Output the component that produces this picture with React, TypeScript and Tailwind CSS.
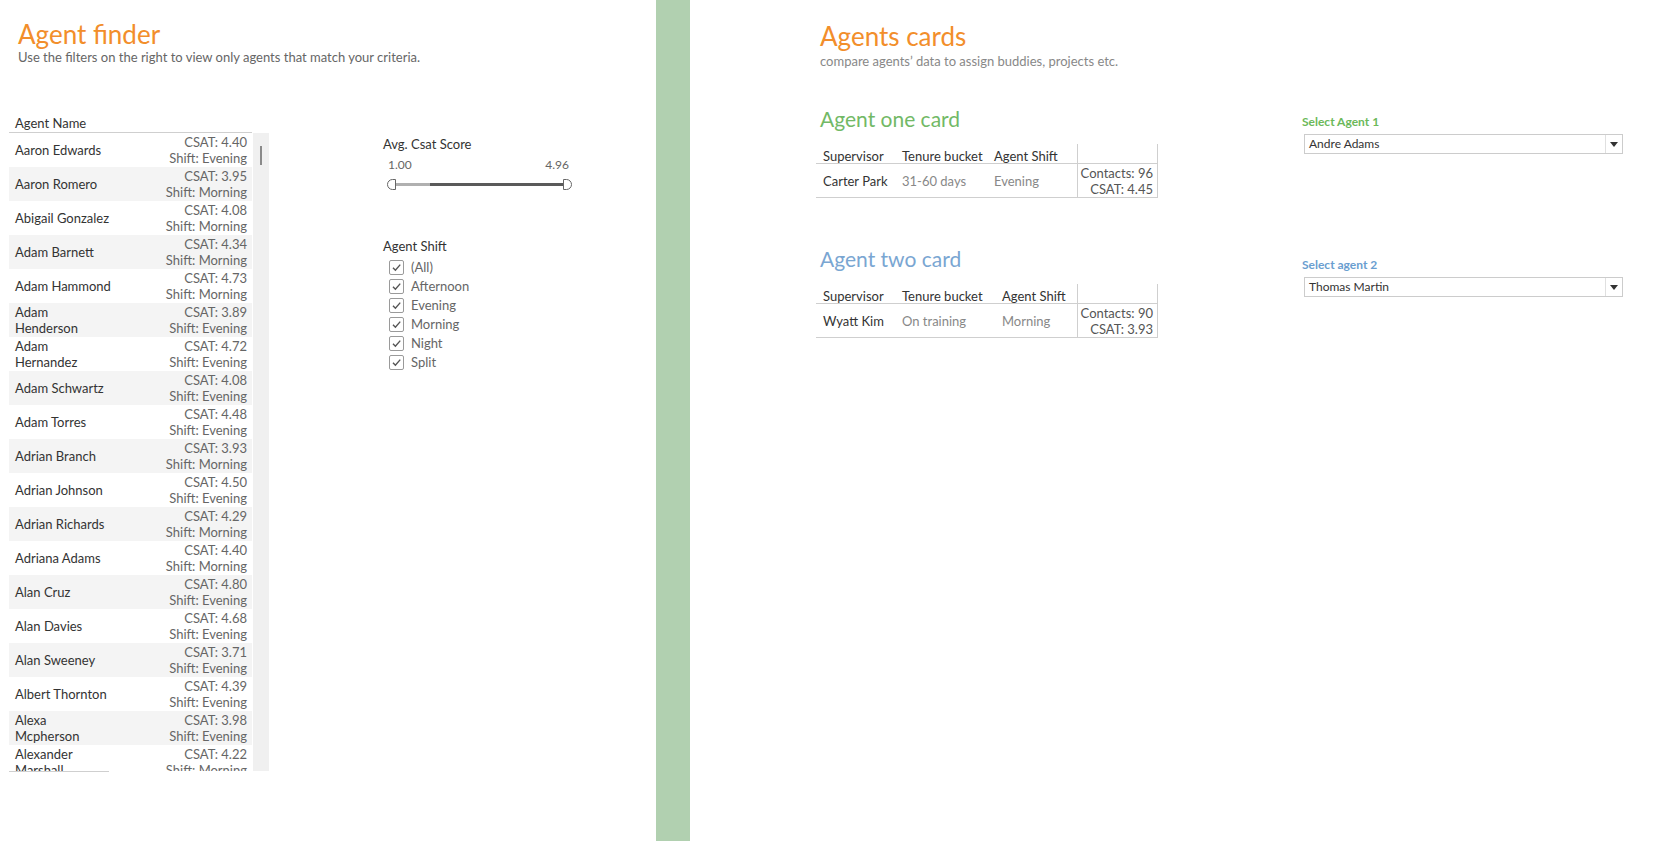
import React from "react";

type Agent = { name: string[]; csat: string; shift: string };

const agents: Agent[] = [
  { name: ["Aaron Edwards"], csat: "4.40", shift: "Evening" },
  { name: ["Aaron Romero"], csat: "3.95", shift: "Morning" },
  { name: ["Abigail Gonzalez"], csat: "4.08", shift: "Morning" },
  { name: ["Adam Barnett"], csat: "4.34", shift: "Morning" },
  { name: ["Adam Hammond"], csat: "4.73", shift: "Morning" },
  { name: ["Adam", "Henderson"], csat: "3.89", shift: "Evening" },
  { name: ["Adam", "Hernandez"], csat: "4.72", shift: "Evening" },
  { name: ["Adam Schwartz"], csat: "4.08", shift: "Evening" },
  { name: ["Adam Torres"], csat: "4.48", shift: "Evening" },
  { name: ["Adrian Branch"], csat: "3.93", shift: "Morning" },
  { name: ["Adrian Johnson"], csat: "4.50", shift: "Evening" },
  { name: ["Adrian Richards"], csat: "4.29", shift: "Morning" },
  { name: ["Adriana Adams"], csat: "4.40", shift: "Morning" },
  { name: ["Alan Cruz"], csat: "4.80", shift: "Evening" },
  { name: ["Alan Davies"], csat: "4.68", shift: "Evening" },
  { name: ["Alan Sweeney"], csat: "3.71", shift: "Evening" },
  { name: ["Albert Thornton"], csat: "4.39", shift: "Evening" },
  { name: ["Alexa", "Mcpherson"], csat: "3.98", shift: "Evening" },
  { name: ["Alexander", "Marshall"], csat: "4.22", shift: "Morning" },
];

const shifts = ["(All)", "Afternoon", "Evening", "Morning", "Night", "Split"];

const Check = () => (
  <span className="flex h-[15px] w-[15px] items-center justify-center rounded-[2px] border border-[#9a9a9a] bg-white">
    <svg width="11" height="11" viewBox="0 0 10 10">
      <path d="M1.8 5.2 L4 7.4 L8.4 2.4" fill="none" stroke="#555" strokeWidth="1.3" />
    </svg>
  </span>
);

const AgentRow = ({ a, i }: { a: Agent; i: number }) => (
  <div className={`flex h-[34px] shrink-0 items-center justify-between pl-[6px] pr-[5px] ${i % 2 ? "bg-[#f4f4f4]" : "bg-white"}`}>
    <div className="text-[13px] leading-[16px] text-[#333]">
      {a.name.map((l) => (
        <div key={l}>{l}</div>
      ))}
    </div>
    <div className="text-right text-[13px] leading-[16px] text-[#666]">
      <div>CSAT: {a.csat}</div>
      <div>Shift: {a.shift}</div>
    </div>
  </div>
);

type Card = {
  title: string;
  color: string;
  sup: string;
  tenure: string;
  shift: string;
  contacts: string;
  csat: string;
  widths: [string, string, string];
};

const CardTable = ({ c }: { c: Card }) => (
  <div>
    <div className={`pl-[4px] text-[21px] leading-[28px] ${c.color}`}>{c.title}</div>
    <div className="mt-[11px] flex w-[342px] text-[13px]">
      <div className="flex flex-col border-b border-[#cfcfcf]">
        <div className="flex h-[20px] border-b border-[#cfcfcf] pt-[4px] leading-[16px] text-[#333]">
          <div className={`${c.widths[0]} pl-[7px]`}>Supervisor</div>
          <div className={`${c.widths[1]} pl-[7px]`}>Tenure bucket</div>
          <div className={`${c.widths[2]} pl-[7px]`}>Agent Shift</div>
        </div>
        <div className="flex h-[33px] items-center pt-[3px]">
          <div className={`${c.widths[0]} pl-[7px] text-[#333]`}>{c.sup}</div>
          <div className={`${c.widths[1]} pl-[7px] text-[#888]`}>{c.tenure}</div>
          <div className={`${c.widths[2]} pl-[7px] text-[#888]`}>{c.shift}</div>
        </div>
      </div>
      <div className="flex w-[81px] flex-col border-x border-b border-[#cfcfcf]">
        <div className="h-[20px] border-b border-[#cfcfcf]" />
        <div className="flex h-[33px] flex-col justify-center pr-[4px] text-right leading-[16px] text-[#555]">
          <div>Contacts: {c.contacts}</div>
          <div>CSAT: {c.csat}</div>
        </div>
      </div>
    </div>
  </div>
);

const Dropdown = ({ label, color, value }: { label: string; color: string; value: string }) => (
  <div>
    <div className={`text-[12px] font-bold leading-[16px] ${color}`}>{label}</div>
    <div className="ml-[2px] mt-[4px] flex h-[20px] w-[319px] items-center border border-[#cccccc] bg-white">
      <div className="flex-1 pl-[4px] text-[12px] text-[#333]">{value}</div>
      <div className="flex h-full w-[17px] items-center justify-center border-l border-[#e0e0e0]">
        <svg width="8" height="5" viewBox="0 0 8 5">
          <path d="M0 0 H8 L4 5 Z" fill="#333" />
        </svg>
      </div>
    </div>
  </div>
);

export default function App() {
  return (
    <div className="flex h-[841px] w-[1673px] overflow-hidden bg-white font-['Lato','Open_Sans',sans-serif]">
      {/* left: agent finder */}
      <div className="w-[656px] shrink-0">
        <div className="pl-[18px] pt-[19px]">
          <div className="text-[26px] leading-[30px] text-[#f28e2b]">Agent finder</div>
          <div className="text-[13px] leading-[16px] text-[#666]">
            Use the filters on the right to view only agents that match your criteria.
          </div>
        </div>
        <div className="mt-[47px] flex">
          <div className="ml-[9px] flex flex-col">
            <div className="h-[21px] w-[243px] border-b border-[#cfcfcf] pl-[6px] pt-[3px] text-[13px] leading-[16px] text-[#333]">
              Agent Name
            </div>
            <div className="flex">
              <div className="flex h-[638px] w-[243px] flex-col overflow-hidden">
                {agents.map((a, i) => (
                  <AgentRow key={a.name.join(" ")} a={a} i={i} />
                ))}
              </div>
              <div className="ml-[1px] w-[16px] bg-[#f0f0f0] pl-[7px] pt-[13px]">
                <div className="h-[19px] w-[2px] bg-[#8a8a8a]" />
              </div>
            </div>
            <div className="h-px w-[100px] bg-[#cfcfcf]" />
          </div>

          <div className="ml-[114px] flex w-[190px] flex-col pt-[24px]">
            <div className="text-[13px] leading-[16px] text-[#333]">Avg. Csat Score</div>
            <div className="mt-[6px] flex justify-between pl-[5px] pr-[4px] text-[12px] leading-[14px] text-[#666]">
              <span>1.00</span>
              <span>4.96</span>
            </div>
            <div className="mt-[7px] flex h-[11px] items-center pl-[4px]">
              <div className="h-[11px] w-[9px] rounded-l-[6px] border border-[#666] bg-white" />
              <div className="h-[3px] w-[34px] bg-[#b0b0b0]" />
              <div className="h-[3px] w-[133px] bg-[#5a5a5a]" />
              <div className="h-[11px] w-[9px] rounded-r-[6px] border border-[#666] bg-white" />
            </div>
            <div className="mt-[48px] text-[13px] leading-[16px] text-[#333]">Agent Shift</div>
            <div className="mt-[4px] flex flex-col pl-[6px]">
              {shifts.map((s) => (
                <label key={s} className="flex h-[19px] items-center gap-[7px] text-[13px] text-[#666]">
                  <Check />
                  <span>{s}</span>
                </label>
              ))}
            </div>
          </div>
        </div>
      </div>

      {/* divider */}
      <div className="w-[34px] shrink-0 bg-[#b1d0b0]" />

      {/* right: agent cards */}
      <div className="flex-1 pl-[126px]">
        <div className="pl-[4px] pt-[20px]">
          <div className="text-[26px] leading-[32px] text-[#f28e2b]">Agents cards</div>
          <div className="pt-[1px] text-[13px] leading-[16px] text-[#888]">
            compare agents’ data to assign buddies, projects etc.
          </div>
        </div>
        <div className="mt-[36px] flex">
          <div className="flex w-[486px] flex-col gap-[47px]">
            <CardTable
              c={{
                title: "Agent one card",
                color: "text-[#72b966]",
                sup: "Carter Park",
                tenure: "31-60 days",
                shift: "Evening",
                contacts: "96",
                csat: "4.45",
                widths: ["w-[79px]", "w-[92px]", "w-[90px]"],
              }}
            />
            <CardTable
              c={{
                title: "Agent two card",
                color: "text-[#7aa6d2]",
                sup: "Wyatt Kim",
                tenure: "On training",
                shift: "Morning",
                contacts: "90",
                csat: "3.93",
                widths: ["w-[79px]", "w-[100px]", "w-[82px]"],
              }}
            />
          </div>
          <div className="flex flex-col gap-[103px] pt-[9px]">
            <Dropdown label="Select Agent 1" color="text-[#6cb95a]" value="Andre Adams" />
            <Dropdown label="Select agent 2" color="text-[#6a9ed0]" value="Thomas Martin" />
          </div>
        </div>
      </div>
    </div>
  );
}
